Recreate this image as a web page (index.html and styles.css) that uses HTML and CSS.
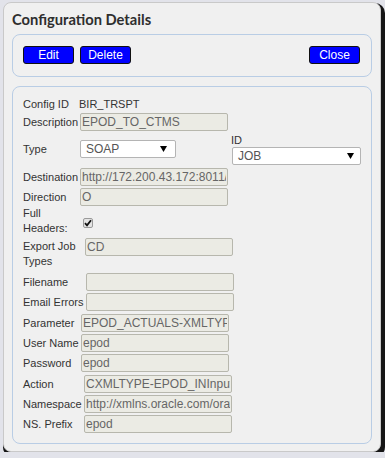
FILE: index.html
```html
<!DOCTYPE html>
<html lang="en">
<head>
<meta charset="UTF-8">
<meta name="viewport" content="width=device-width, initial-scale=1.0">
<title>Configuration Details</title>
<link rel="stylesheet" href="styles.css">
</head>
<body>

<div class="dialog">
  <h1 class="dialog-title">Configuration Details</h1>

  <div class="toolbar">
    <button class="btn">Edit</button>
    <button class="btn">Delete</button>
    <button class="btn btn-close">Close</button>
  </div>

  <div class="details">
    <div class="group g-a">
      <div class="row m0">
        <span class="lbl">Config ID</span>
        <span class="val">BIR_TRSPT</span>
      </div>
      <div class="row m0">
        <span class="lbl">Description</span>
        <input class="field" type="text" value="EPOD_TO_CTMS" readonly>
      </div>
      <div class="row row-type">
        <span class="lbl">Type</span>
        <div class="select sel-type"><span>SOAP</span><svg width="7" height="6" viewBox="0 0 7 6"><path d="M0 0H7L3.5 6Z" fill="#000"/></svg></div>
        <div class="id-col">
          <span class="lbl-id">ID</span>
          <div class="select sel-id"><span>JOB</span><svg width="7" height="6" viewBox="0 0 7 6"><path d="M0 0H7L3.5 6Z" fill="#000"/></svg></div>
        </div>
      </div>
      <div class="row m3">
        <span class="lbl">Destination</span>
        <input class="field" type="text" value="http://172.200.43.172:8011/EPOD/ProxyService" readonly>
      </div>
      <div class="row">
        <span class="lbl">Direction</span>
        <input class="field" type="text" value="O" readonly>
      </div>
    </div>

    <div class="group g-b">
      <div class="row row-two m0">
        <span class="lbl">Full Headers:</span>
        <span class="check"><svg width="8" height="8" viewBox="0 0 8 8"><path d="M1 4.2L3 6.3L7 1.2" fill="none" stroke="#111" stroke-width="1.8"/></svg></span>
      </div>
      <div class="row row-two row-top">
        <span class="lbl">Export Job Types</span>
        <input class="field" type="text" value="CD" readonly>
      </div>
    </div>

    <div class="group g-c">
      <div class="row m4">
        <span class="lbl">Filename</span>
        <input class="field" type="text" value="" readonly>
      </div>
      <div class="row">
        <span class="lbl">Email Errors</span>
        <input class="field" type="text" value="" readonly>
      </div>
    </div>

    <div class="group g-d">
      <div class="row m3">
        <span class="lbl">Parameter</span>
        <input class="field" type="text" value="EPOD_ACTUALS-XMLTYPE" readonly>
      </div>
      <div class="row">
        <span class="lbl">User Name</span>
        <input class="field" type="text" value="epod" readonly>
      </div>
      <div class="row">
        <span class="lbl">Password</span>
        <input class="field" type="text" value="epod" readonly>
      </div>
    </div>

    <div class="group g-e">
      <div class="row m3">
        <span class="lbl">Action</span>
        <input class="field" type="text" value="CXMLTYPE-EPOD_INInput" readonly>
      </div>
      <div class="row">
        <span class="lbl">Namespace</span>
        <input class="field" type="text" value="http://xmlns.oracle.com/orawsv" readonly>
      </div>
      <div class="row">
        <span class="lbl">NS. Prefix</span>
        <input class="field" type="text" value="epod" readonly>
      </div>
    </div>
  </div>
</div>

</body>
</html>
```

FILE: styles.css
```css
body {
  margin: 0;
  background-color: #e2e3ea;
  font-family: 'Liberation Sans', Arial, sans-serif;
  color: #333;
}
.dialog {
  box-sizing: border-box;
  width: 378px;
  height: 450px;
  margin: 2px 0 0 3px;
  padding: 7px 8px 6px;
  background-color: #f0f0f0;
  border: 1px solid #c9c9c9;
  border-radius: 8px;
  box-shadow: 2px 3px 0 2px #161616;
}
.dialog-title {
  margin: 0;
  font-family: 'Lato', 'Liberation Sans', sans-serif;
  font-size: 14.7px;
  font-weight: bold;
  line-height: 18px;
  color: #2e2e2e;
}
.toolbar {
  display: flex;
  gap: 6px;
  margin-top: 6px;
  padding: 11px 11px 12px 10px;
  border: 1px solid #b9cde5;
  border-radius: 8px;
}
.btn {
  box-sizing: border-box;
  width: 51px;
  height: 18px;
  padding: 0;
  font-family: 'Liberation Sans', Arial, sans-serif;
  font-size: 12px;
  color: #fff;
  background-color: #0000ff;
  border: 1px solid #111;
  border-radius: 3px;
  cursor: pointer;
}
.btn-close {
  margin-left: auto;
}
.details {
  margin-top: 9px;
  padding: 8px 10px 11px;
  border: 1px solid #b9cde5;
  border-radius: 8px;
  height: 337px;
}
.row {
  display: flex;
  align-items: center;
  margin-top: 2px;
  font-size: 11px;
}
.row.m0 { margin-top: 0; }
.row.m3 { margin-top: 3px; }
.row.m4 { margin-top: 4px; }
.lbl {
  flex: none;
  line-height: 14px;
}
.g-a .lbl { width: 57px; }
.g-b .lbl { width: 62px; }
.g-c .lbl { width: 63px; }
.g-d .lbl { width: 58px; }
.g-e .lbl { width: 61px; }
.val {
  line-height: 18px;
  margin-left: -1px;
}
.field {
  box-sizing: border-box;
  width: 148px;
  height: 18px;
  margin: 0;
  padding: 0 1px;
  font-family: 'Liberation Sans', Arial, sans-serif;
  font-size: 12px;
  color: #666;
  background-color: #ebebe4;
  border: 1px solid #b7b7ad;
  border-radius: 2px;
  outline: none;
}
.row-type {
  height: 32px;
}
.select {
  box-sizing: border-box;
  display: flex;
  align-items: center;
  justify-content: space-between;
  height: 18px;
  padding: 0 8px 0 5px;
  font-size: 12px;
  color: #555;
  background-color: #fff;
  border: 1px solid #b4b4b4;
  border-radius: 2px;
}
.sel-type {
  width: 96px;
}
.sel-id {
  width: 129px;
  padding-right: 6px;
}
.id-col {
  display: flex;
  flex-direction: column;
  margin-left: 56px;
}
.lbl-id {
  line-height: 14px;
  margin-left: -1px;
}
.row-two .lbl {
  line-height: 15px;
}
.row-top {
  align-items: flex-start;
}
.row-top .lbl {
  margin-top: 1px;
}
.check {
  box-sizing: border-box;
  display: flex;
  align-items: center;
  justify-content: center;
  width: 10px;
  height: 10px;
  margin: 3px 0 0 -2px;
  background-color: #e4e4e4;
  border: 1px solid #9a9a9a;
  border-radius: 2px;
}
```
